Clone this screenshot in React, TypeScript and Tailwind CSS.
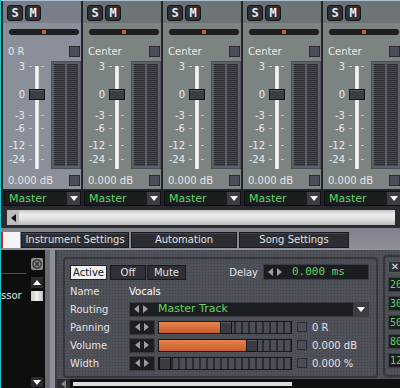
import React from "react";

type Dir = "l" | "r" | "u" | "d";

function Tri({ dir, className }: { dir: Dir; className?: string }) {
  const horiz = dir === "l" || dir === "r";
  const w = horiz ? 5 : 8;
  const h = horiz ? 8 : 5;
  const pts = { l: "5,0 5,8 0,4", r: "0,0 0,8 5,4", u: "0,5 8,5 4,0", d: "0,0 8,0 4,5" }[dir];
  return (
    <svg width={w} height={h} viewBox={`0 0 ${w} ${h}`} className={className}>
      <polygon points={pts} fill="currentColor" />
    </svg>
  );
}

function SmBtn({ children }: { children: React.ReactNode }) {
  return (
    <div className="w-[16px] h-[16px] rounded-[3px] bg-[#2f3136] border border-[#15161a] flex items-center justify-center text-[12px] font-bold leading-none text-[#ececec] font-['DejaVu_Sans_Mono',monospace]">
      {children}
    </div>
  );
}

function Square() {
  return <div className="w-[11px] h-[11px] bg-[#4c4f5b] border border-[#2b2c31]" />;
}

const scale = [
  { t: "3", y: 0 },
  { t: "0", y: 28 },
  { t: "-3", y: 49 },
  { t: "-6", y: 62 },
  { t: "-12", y: 79 },
  { t: "-24", y: 93 },
];

function Strip({ pan, selected }: { pan: string; selected?: boolean }) {
  return (
    <div className="w-[80px] shrink-0 flex flex-col border-r-2 border-[#222327]">
      <div className={selected ? "flex flex-col bg-[#8b8f9a]" : "flex flex-col bg-[#7c8482]"}>
        <div className={selected ? "h-[22px] flex gap-[2px] pl-[4px] pt-[4px] bg-[#7a7e88]" : "h-[22px] flex gap-[2px] pl-[4px] pt-[4px] bg-[#6e7475]"}>
          <SmBtn>S</SmBtn>
          <SmBtn>M</SmBtn>
        </div>
        <div className="mt-[6px] ml-[6px] w-[70px] h-[6px] rounded-full bg-[#1d1e21] flex items-center justify-center">
          <div className="w-[4px] h-[4px] bg-[#c8622c]" />
        </div>
        <div className="mt-[10px] h-[12px] flex items-center justify-between pl-[5px] pr-[1px] text-[#e6e6e6]">
          <span>{pan}</span>
          <Square />
        </div>
        <div className="mt-[4px] h-[108px] flex">
          <div className="relative w-[49px] h-full">
            {scale.map((s) => (
              <React.Fragment key={s.t}>
                <span className="absolute left-0 w-[22px] text-right leading-[11px] text-[#e8e8e8]" style={{ top: s.y }}>
                  {s.t}
                </span>
                <div className="absolute left-[26px] w-[3px] h-px bg-[#c4c6cc]" style={{ top: s.y + 5 }} />
                <div className="absolute left-[38px] w-[3px] h-px bg-[#c4c6cc]" style={{ top: s.y + 5 }} />
              </React.Fragment>
            ))}
            <div className="absolute left-[32px] top-[5px] bottom-0 w-[4px] bg-[linear-gradient(to_right,#d8d8d8,#ffffff,#cfcfcf)]" />
            <div className="absolute left-[26px] top-[28px] w-[16px] h-[11px] bg-[#3a3d43] border border-[#121315] shadow-[inset_0_1px_0_#55585f]" />
          </div>
          <div className="w-[30px] h-full bg-[#5c5f6a] border border-[#4b4e57] p-[2px] flex gap-[2px]">
            <div className="flex-1 bg-[repeating-linear-gradient(to_bottom,#2a2c31_0px,#2a2c31_1px,#484b52_1px,#484b52_2px)]" />
            <div className="flex-1 bg-[repeating-linear-gradient(to_bottom,#2a2c31_0px,#2a2c31_1px,#484b52_1px,#484b52_2px)]" />
          </div>
        </div>
        <div className="mt-[4px] mb-[2px] h-[14px] flex items-center justify-between pl-[5px] pr-[1px] text-[#e6e6e6]">
          <span>0.000 dB</span>
          <Square />
        </div>
      </div>
      <div className="h-[18px] pt-[2px] pb-[1px] pl-[1px] bg-[#232427]">
        <div className="h-[15px] flex bg-[#1c1d20] border border-[#0e0e10]">
          <span className="flex-1 pl-[4px] leading-[13px] text-[11px] text-[#62d462]">Master</span>
          <div className="w-[13px] bg-[#3b3d42] flex items-center justify-center text-white">
            <Tri dir="d" />
          </div>
        </div>
      </div>
    </div>
  );
}

function Arrows() {
  return (
    <div className="flex items-center gap-[4px] text-[#9c9ea3]">
      <Tri dir="l" />
      <Tri dir="r" />
    </div>
  );
}

function Slider({ pos, fill }: { pos: number; fill: boolean }) {
  return (
    <div className="relative w-[134px] h-[13px] border border-[#18191c] bg-[repeating-linear-gradient(to_right,#4b4e55_0px,#4b4e55_5px,#2b2c30_5px,#2b2c30_7px)]">
      {fill && (
        <div className="absolute left-0 top-0 bottom-0 bg-[linear-gradient(#e5844f,#c95d28)]" style={{ width: pos + 2 }} />
      )}
      <div className="absolute top-[-1px] w-[12px] h-[13px] bg-[#3a3c42] border border-[#101113] shadow-[inset_0_1px_0_#5a5d64]" style={{ left: pos }} />
    </div>
  );
}

function Row({ label, children }: { label: string; children: React.ReactNode }) {
  return (
    <div className="h-[18px] flex items-center">
      <span className="w-[59px] text-[#e2e2e2]">{label}</span>
      {children}
    </div>
  );
}

function KnobRow({ label, pos, fill, value }: { label: string; pos: number; fill: boolean; value: string }) {
  return (
    <Row label={label}>
      <div className="w-[26px] h-[15px] bg-[#1d1e21] border border-[#3a3c42] flex items-center justify-center">
        <Arrows />
      </div>
      <div className="ml-[3px]">
        <Slider pos={pos} fill={fill} />
      </div>
      <div className="ml-[5px] w-[10px] h-[10px] bg-[#4a4d55] border border-[#2b2c31]" />
      <span className="ml-[5px] text-[#e2e2e2]">{value}</span>
    </Row>
  );
}

function TabBtn({ label, w, ml }: { label: string; w: string; ml: string }) {
  return (
    <div className={`${w} ${ml} h-[16px] bg-[#2c2e33] border border-[#18191c] shadow-[inset_0_1px_0_#45474d] flex items-center justify-center whitespace-nowrap text-[#e2e2e2] leading-none`}>
      {label}
    </div>
  );
}

export default function App() {
  return (
    <div className="w-[400px] h-[388px] overflow-hidden flex flex-col bg-[#2a2b2f] border-l border-[#18c8cc] font-['DejaVu_Sans',sans-serif] text-[10px]">
      {/* mixer strips */}
      <div className="h-[206px] flex pl-[2px] bg-[#222327] border-t border-[#a8c4d4]">
        <Strip pan="0 R" selected />
        <Strip pan="Center" />
        <Strip pan="Center" />
        <Strip pan="Center" />
        <Strip pan="Center" />
      </div>
      {/* mixer scrollbar */}
      <div className="h-[22px] bg-[#2a2b2f] pl-[6px] pt-[4px]">
        <div className="h-[15px] flex">
          <div className="w-[12px] bg-[#bcbcbc] flex items-center justify-center text-[#111]">
            <Tri dir="l" />
          </div>
          <div className="w-[376px] bg-[linear-gradient(to_bottom,#c6c6c6_0%,#ececec_30%,#e2e2e2_60%,#b9b9b9_100%)]" />
        </div>
      </div>
      {/* tab bar */}
      <div className="h-[22px] bg-[linear-gradient(to_bottom,#7f828a,#8e9199)] flex pt-[4px]">
        <div className="w-[19px] h-[16px] bg-[#f4f4f4] border-l-2 border-[#d42424]" />
        <TabBtn label="Instrument Settings" w="w-[108px]" ml="ml-[1px]" />
        <TabBtn label="Automation" w="w-[106px]" ml="ml-[2px]" />
        <TabBtn label="Song Settings" w="w-[110px]" ml="ml-[2px]" />
      </div>
      {/* bottom */}
      <div className="flex-1 flex min-h-0">
        <div className="w-[44px] shrink-0 flex bg-[#0e0e0f]">
          <div className="w-[30px] flex flex-col">
            <div className="mt-[23px] h-px w-[25px] bg-[#4a4b50]" />
            <span className="mt-[16px] text-[#e2e2e2] leading-[12px]">ssor</span>
          </div>
          <div className="w-[13px] flex flex-col pb-[1px]">
            <div className="mt-[8px] w-[12px] h-[12px] rounded-[2px] bg-[#8c8e94] flex items-center justify-center">
              <svg width="10" height="10" viewBox="0 0 10 10">
                <circle cx="5" cy="5" r="4.2" fill="none" stroke="#2a2b2f" strokeWidth="1.2" />
                <path d="M3 3 L7 7 M7 3 L3 7" stroke="#2a2b2f" strokeWidth="1.2" />
              </svg>
            </div>
            <div className="mt-[7px] w-[12px] h-[11px] bg-[#2a2b30] flex items-center justify-center text-white">
              <Tri dir="u" />
            </div>
            <div className="mt-[3px] w-[12px] h-[10px] bg-[linear-gradient(to_right,#c8c8c8,#f2f2f2,#bcbcbc)]" />
            <div className="flex-1" />
            <div className="w-[12px] h-[10px] bg-[#2a2b30] flex items-center justify-center text-white">
              <Tri dir="d" />
            </div>
          </div>
        </div>
        <div className="w-[12px] shrink-0 bg-[linear-gradient(to_right,#6a6c73_0px,#6a6c73_5px,#8d9098_5px,#8d9098_10px,#3c3d42_10px)]" />
        <div className="flex-1 flex flex-col min-w-0 bg-[#4f5159] bg-[radial-gradient(#3e4047_0.8px,transparent_0.8px)] bg-[length:3px_3px]">
          <div className="h-[129px] flex">
            <div className="ml-[6px] mt-[7px] w-[315px] h-[121px] shrink-0 rounded-[4px] border-2 border-[#36373d] pl-[5px] pt-[5px] pr-[7px] flex flex-col">
              <div className="h-[16px] flex items-center">
                <div className="w-[37px] h-[15px] bg-[#f2f2f2] border border-[#222] flex items-center justify-center text-[#111]">Active</div>
                <div className="ml-[3px] w-[36px] h-[15px] bg-[#2e3035] border border-[#17181b] flex items-center justify-center text-[#e2e2e2]">Off</div>
                <div className="ml-[1px] w-[39px] h-[15px] bg-[#2e3035] border border-[#17181b] flex items-center justify-center text-[#e2e2e2]">Mute</div>
                <div className="flex-1" />
                <span className="mr-[5px] text-[#e2e2e2]">Delay</span>
                <div className="w-[106px] h-[16px] bg-[#1c1d20] border border-[#3a3c42] flex items-center pl-[4px]">
                  <Arrows />
                  <span className="ml-[10px] text-[11px] text-[#62d462] font-['DejaVu_Sans_Mono',monospace]">0.000 ms</span>
                </div>
              </div>
              <div className="mt-[2px] flex flex-col">
                <Row label="Name">
                  <span className="text-white">Vocals</span>
                </Row>
                <Row label="Routing">
                  <div className="w-[240px] h-[15px] bg-[#1d1e21] border border-[#3a3c42] flex items-center pl-[4px]">
                    <Arrows />
                    <span className="ml-[10px] flex-1 text-[11px] text-[#62d462]">Master Track</span>
                    <div className="w-[15px] h-full bg-[#3b3d42] flex items-center justify-center text-white">
                      <Tri dir="d" />
                    </div>
                  </div>
                </Row>
                <KnobRow label="Panning" pos={61} fill value="0 R" />
                <KnobRow label="Volume" pos={87} fill value="0.000 dB" />
                <KnobRow label="Width" pos={0} fill={false} value="0.000 %" />
              </div>
            </div>
            <div className="ml-[5px] mt-[5px] w-[22px] h-[122px] shrink-0 rounded-[4px] border-2 border-[#36373d] pl-[3px] pt-[4px] flex flex-col gap-[4px]">
              <div className="w-[14px] h-[12px] bg-[#2e3035] border border-[#555] flex items-center justify-center text-[#e2e2e2] leading-none">✕</div>
              {["20", "30", "50", "80", "12"].map((n) => (
                <div key={n} className="w-[16px] h-[15px] overflow-hidden bg-[#1c1d20] border border-[#3a3c42] pl-[1px] text-[#62d462] leading-[13px] font-['DejaVu_Sans_Mono',monospace]">
                  {n}
                </div>
              ))}
            </div>
          </div>
          <div className="h-[9px] flex bg-[#101012]">
            <div className="w-[13px] bg-[#2c2d31] flex items-center justify-center text-[#888]">
              <Tri dir="l" />
            </div>
            <div className="ml-[3px] mt-[3px] w-[219px] h-[4px] bg-[#dcdcdc]" />
          </div>
        </div>
      </div>
    </div>
  );
}
